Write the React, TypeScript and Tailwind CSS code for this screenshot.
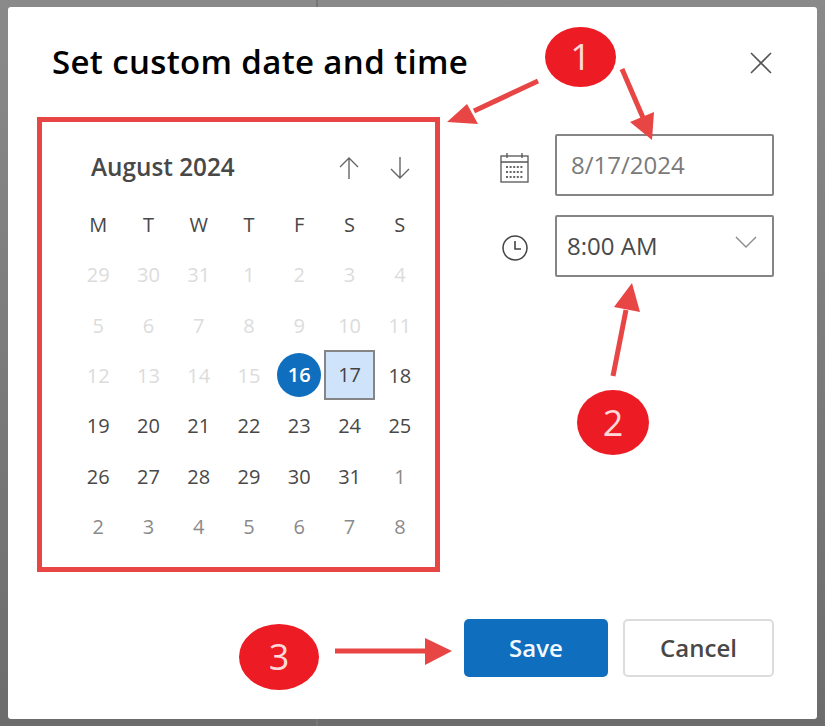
const WEEK_DAYS = ['M', 'T', 'W', 'T', 'F', 'S', 'S'];

type Day = { label: number; kind: 'faded' | 'normal' | 'other' | 'today' | 'selected' };

const faded = [29, 30, 31, 1, 2, 3, 4, 5, 6, 7, 8, 9, 10, 11, 12, 13, 14, 15];
const days: Day[] = [
    ...faded.map((label): Day => ({ label, kind: 'faded' })),
    { label: 16, kind: 'today' },
    { label: 17, kind: 'selected' },
    ...Array.from({ length: 14 }, (_, i): Day => ({ label: i + 18, kind: 'normal' })),
    ...[1, 2, 3, 4, 5, 6, 7, 8].map((label): Day => ({ label, kind: 'other' }))
];

const DayCell = ({ day }: { day: Day }) => {
    if (day.kind === 'today') {
        return (
            <div className="flex h-[50.3px] items-center justify-center">
                <span className="mb-[3px] flex h-[44px] w-[44px] items-center justify-center rounded-full bg-[#106ebe] font-semibold text-white">{day.label}</span>
            </div>
        );
    }
    if (day.kind === 'selected') {
        return (
            <div className="-mt-px flex h-[50.3px] items-center justify-center border-2 border-[#858585] bg-[#cfe4fa] text-[#424242]">{day.label}</div>
        );
    }
    const color = day.kind === 'faded' ? 'text-[#dcdcdc]' : day.kind === 'other' ? 'text-[#8a8a8a]' : 'text-[#484848]';
    return <div className={`flex h-[50.3px] items-center justify-center ${color}`}>{day.label}</div>;
};

const Annotations = () => (
    <svg className="absolute left-0 top-0" width="825" height="726" fill="#e84545" stroke="none">
        <path d="M538 81 474 111" stroke="#e84545" strokeWidth="5" />
        <path d="M447 122 467 104 478 124Z" />
        <path d="M622 69 644 120" stroke="#e84545" strokeWidth="5" />
        <path d="M652 140 630 122 654 112Z" />
        <path d="M613 376 626 310" stroke="#e84545" strokeWidth="5" />
        <path d="M632 283 640 312 614 307Z" />
        <path d="M335 651 427 651" stroke="#e84545" strokeWidth="5" />
        <path d="M452 651 425 638 425 665Z" />
    </svg>
);

const Badge = ({ n, className }: { n: number; className: string }) => (
    <div className={`absolute flex items-center justify-center rounded-[50%] bg-[#ed1c24] text-[36px] text-[#ffd9d9] ${className}`}>{n}</div>
);

export default function App() {
    return (
        <div className="relative h-[726px] w-[825px] overflow-hidden bg-linear-to-b from-[#8a8a8a] to-[#6c6c6c] pl-2 pt-[7px] font-['Open_Sans',sans-serif]">
            <div className="absolute left-[316px] top-0 h-full w-[2px] bg-[#767676]" />
            <div className="relative flex h-[712px] w-[809px] flex-col rounded-[3px] bg-white">
                <div className="flex h-[110px] items-start justify-between pl-11 pr-[45px] pt-[32px]">
                    <h1 className="text-[33px] font-semibold leading-[46px] tracking-[0.35px] text-black">Set custom date and time</h1>
                    <svg className="mt-[13px]" width="22" height="22" viewBox="0 0 22 22" fill="none" stroke="#555" strokeWidth="1.6">
                        <path d="M1 1 21 21M21 1 1 21" />
                    </svg>
                </div>
                <div className="flex items-start pl-[29px]">
                    <div className="h-[455px] w-[403px] border-[5px] border-[#e84545] pl-[31px] pr-[10px] text-[20px]">
                        <div className="flex h-[78px] items-center justify-between pl-[18px] pr-[15px] pt-[13px]">
                            <span className="text-[24.3px] font-semibold text-[#484848]">August 2024</span>
                            <div className="flex gap-[31px]">
                                <svg width="20" height="22" viewBox="0 0 20 22" fill="none" stroke="#666" strokeWidth="1.4">
                                    <path d="M10 22V1M1 10 10 1 19 10" />
                                </svg>
                                <svg width="20" height="22" viewBox="0 0 20 22" fill="none" stroke="#666" strokeWidth="1.4">
                                    <path d="M10 0V21M1 12 10 21 19 12" />
                                </svg>
                            </div>
                        </div>
                        <div className="grid grid-cols-7">
                            {WEEK_DAYS.map((d, i) => (
                                <div key={i} className="flex h-[50.3px] items-center justify-center text-[#484848]">{d}</div>
                            ))}
                            {days.map((d, i) => <DayCell key={i} day={d} />)}
                        </div>
                    </div>
                    <div className="ml-[60px] mt-[17px] flex flex-col gap-[19px]">
                        <div className="flex items-center gap-[26px]">
                            <svg className="mt-[6px]" width="29" height="30" viewBox="0 0 29 30" fill="none" stroke="#555" strokeWidth="1.3">
                                <rect x="1" y="3" width="27" height="26" />
                                <path d="M1 9H28M7 0V5M22 0V5" />
                                <path d="M6 14H23M6 19H23M6 24H23" strokeWidth="2.2" strokeDasharray="2 1.6" stroke="#666" />
                            </svg>
                            <div className="flex h-[62px] w-[219px] items-center rounded-[2px] border-2 border-[#858585] pl-[14px] text-[24px] text-[#7a7a7a]">8/17/2024</div>
                        </div>
                        <div className="flex items-center gap-[27px] pl-[2px]">
                            <svg className="mt-[4px]" width="26" height="26" viewBox="0 0 26 26" fill="none" stroke="#444" strokeWidth="1.6">
                                <circle cx="13" cy="13" r="12" />
                                <path d="M13 6V14H19" />
                            </svg>
                            <div className="flex h-[62px] w-[219px] items-center justify-between rounded-[2px] border-2 border-[#858585] pl-[10px] pr-[15px] text-[24px] text-[#4a4a4a]">
                                <span>8:00 AM</span>
                                <svg className="mb-[8px]" width="22" height="12" viewBox="0 0 22 12" fill="none" stroke="#8a8a8a" strokeWidth="1.4">
                                    <path d="M1 1 11 11 21 1" />
                                </svg>
                            </div>
                        </div>
                    </div>
                </div>
                <div className="mt-[47px] flex justify-end gap-[15px] pr-[43px]">
                    <button className="h-[58px] w-[144px] rounded-[5px] bg-[#106ebe] text-[24px] font-semibold text-[#f4f8ff]">Save</button>
                    <button className="h-[58px] w-[151px] rounded-[5px] border-2 border-[#dcdcdc] bg-white text-[24px] font-semibold text-[#484848]">Cancel</button>
                </div>
            </div>
            <Annotations />
            <Badge n={1} className="left-[545px] top-[27px] h-[60px] w-[71px]" />
            <Badge n={2} className="left-[577px] top-[390px] h-[65px] w-[72px]" />
            <Badge n={3} className="left-[239px] top-[624px] h-[66px] w-[80px]" />
        </div>
    );
}
